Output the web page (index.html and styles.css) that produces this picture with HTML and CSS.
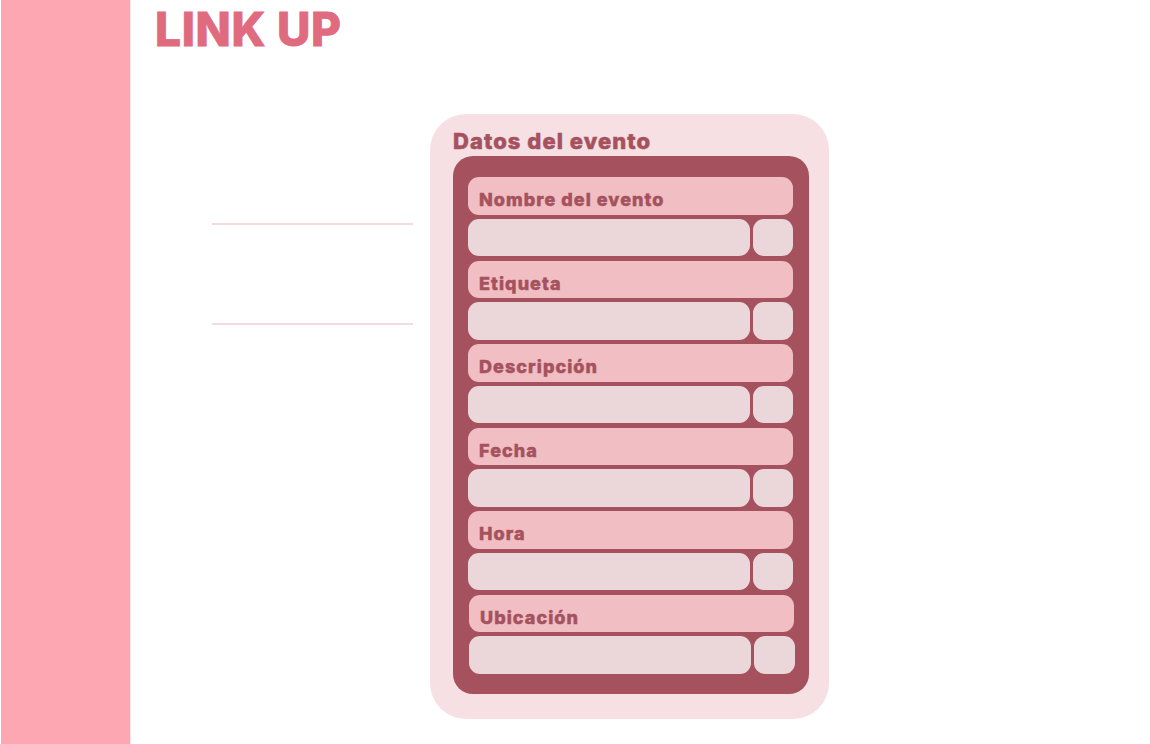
FILE: index.html
```html
<!DOCTYPE html>
<html lang="es">
<head>
<meta charset="utf-8">
<title>Link Up</title>
<link rel="stylesheet" href="styles.css">
</head>
<body>
<div class="app">
  <aside class="sidebar"></aside>
  <main class="main">
    <h1 class="brand">LINK UP</h1>
    <div class="content">
      <div class="lines">
        <div class="line line-a"></div>
        <div class="line line-b"></div>
      </div>
      <section class="card">
        <h2 class="card-title">Datos del evento</h2>
        <div class="panel">
          <div class="label">Nombre del evento</div>
          <div class="field"><div class="input"></div><div class="btn"></div></div>
          <div class="label">Etiqueta</div>
          <div class="field"><div class="input"></div><div class="btn"></div></div>
          <div class="label">Descripción</div>
          <div class="field"><div class="input"></div><div class="btn"></div></div>
          <div class="label">Fecha</div>
          <div class="field"><div class="input"></div><div class="btn"></div></div>
          <div class="label">Hora</div>
          <div class="field"><div class="input"></div><div class="btn"></div></div>
          <div class="label last">Ubicación</div>
          <div class="field last"><div class="input"></div><div class="btn"></div></div>
        </div>
      </section>
    </div>
  </main>
</div>
</body>
</html>
```

FILE: styles.css
```css
* { box-sizing: border-box; }
html, body { margin: 0; padding: 0; background: #ffffff; }
body { font-family: Inter, "Noto Sans", sans-serif; width: 1150px; height: 744px; overflow: hidden; }

.app { display: flex; height: 744px; padding-left: 1px; }

.sidebar {
  width: 130px;
  flex: none;
  background: #fda7b3;
  border-right: 1px solid #fde6ea;
}

.main { flex: 1; display: flex; flex-direction: column; padding-left: 24px; }

.brand {
  margin: 0;
  margin-top: 3px;
  font-size: 46px;
  line-height: 52px;
  font-weight: 800;
  letter-spacing: 0.7px;
  -webkit-text-stroke: 0.8px #e06a7e;
  color: #e06a7e;
}

.content { display: flex; padding-left: 57px; margin-top: 59px; }

.lines { width: 201px; margin-right: 17px; display: flex; flex-direction: column; padding-top: 109px; }
.line { height: 2px; background: #f5dade; }
.line-b { margin-top: 98px; }

.card {
  width: 399px;
  height: 605px;
  background: #f7e0e4;
  border-radius: 36px;
  padding: 14px 20px 25px 23px;
  display: flex;
  flex-direction: column;
}

.card-title {
  margin: 0;
  font-size: 22px;
  line-height: 26px;
  font-weight: 800;
  letter-spacing: 1.05px;
  -webkit-text-stroke: 0.5px #a5525e;
  color: #a5525e;
}

.panel {
  margin-top: 2px;
  flex: 1;
  background: #a5525e;
  border-radius: 20px;
  padding: 21px 16px 0 15px;
  display: flex;
  flex-direction: column;
  gap: 4.25px;
}

.label {
  height: 37.5px;
  background: #f0bec3;
  border-radius: 11px;
  padding: 10px 0 0 11px;
  font-size: 18px;
  line-height: 25px;
  font-weight: 800;
  letter-spacing: 1.05px;
  -webkit-text-stroke: 0.45px #a5525e;
  color: #a5525e;
}

.field { height: 37.5px; display: flex; gap: 3px; }
.input { flex: 1; background: #ebd7da; border-radius: 11px; }
.btn { width: 40px; background: #ebd7da; border-radius: 11px; }

.last { margin-left: 1px; margin-right: -1px; }
.field.last .btn { width: 41px; margin-right: -1px; }
```
